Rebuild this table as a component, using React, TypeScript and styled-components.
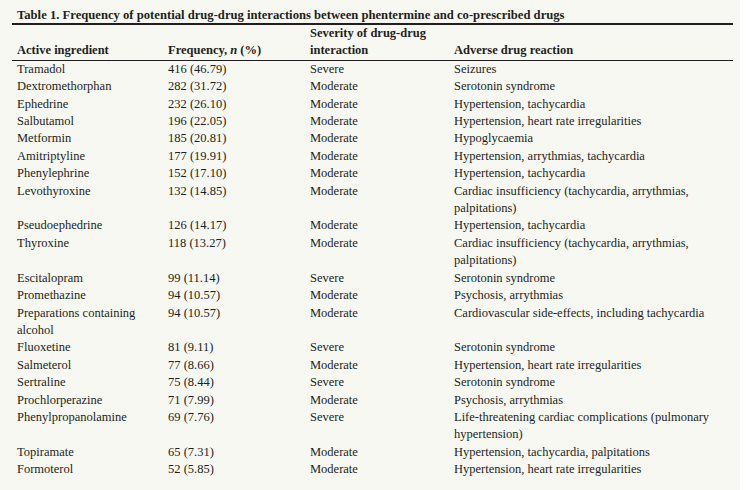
import React from 'react';
import styled, { createGlobalStyle } from 'styled-components';

const GlobalStyle = createGlobalStyle`
  html, body {
    margin: 0;
    padding: 0;
    background: #ffffff;
  }
`;

const Page = styled.div`
  width: 740px;
  height: 490px;
  background: #f7f8f2;
  box-sizing: border-box;
  padding: 7px 0 0 12px;
  font-family: "Liberation Serif", "Times New Roman", serif;
  color: #231f20;
`;

const Caption = styled.div`
  width: 721px;
  box-sizing: border-box;
  padding: 0 0 0 5px;
  font-size: 12.65px;
  font-weight: bold;
  line-height: 16px;
  border-bottom: 2px solid #231f20;
`;

const Table = styled.table`
  width: 721px;
  border-collapse: collapse;
  table-layout: fixed;
  font-size: 12.5px;
  line-height: 17.4px;
`;

const HeadCell = styled.th<{ $w?: number }>`
  width: ${p => (p.$w ? `${p.$w}px` : 'auto')};
  text-align: left;
  vertical-align: bottom;
  font-weight: bold;
  padding: 0 0 0 5px;
  border-bottom: 1px solid #231f20;
  white-space: nowrap;
`;

const Cell = styled.td`
  vertical-align: top;
  padding: 0 0 0 5px;
  white-space: nowrap;
`;

type Row = [string, string, string, string];

const rows: Row[] = [
  ['Tramadol', '416 (46.79)', 'Severe', 'Seizures'],
  ['Dextromethorphan', '282 (31.72)', 'Moderate', 'Serotonin syndrome'],
  ['Ephedrine', '232 (26.10)', 'Moderate', 'Hypertension, tachycardia'],
  ['Salbutamol', '196 (22.05)', 'Moderate', 'Hypertension, heart rate irregularities'],
  ['Metformin', '185 (20.81)', 'Moderate', 'Hypoglycaemia'],
  ['Amitriptyline', '177 (19.91)', 'Moderate', 'Hypertension, arrythmias, tachycardia'],
  ['Phenylephrine', '152 (17.10)', 'Moderate', 'Hypertension, tachycardia'],
  ['Levothyroxine', '132 (14.85)', 'Moderate', 'Cardiac insufficiency (tachycardia, arrythmias,\npalpitations)'],
  ['Pseudoephedrine', '126 (14.17)', 'Moderate', 'Hypertension, tachycardia'],
  ['Thyroxine', '118 (13.27)', 'Moderate', 'Cardiac insufficiency (tachycardia, arrythmias,\npalpitations)'],
  ['Escitalopram', '99 (11.14)', 'Severe', 'Serotonin syndrome'],
  ['Promethazine', '94 (10.57)', 'Moderate', 'Psychosis, arrythmias'],
  ['Preparations containing\nalcohol', '94 (10.57)', 'Moderate', 'Cardiovascular side-effects, including tachycardia'],
  ['Fluoxetine', '81 (9.11)', 'Severe', 'Serotonin syndrome'],
  ['Salmeterol', '77 (8.66)', 'Moderate', 'Hypertension, heart rate irregularities'],
  ['Sertraline', '75 (8.44)', 'Severe', 'Serotonin syndrome'],
  ['Prochlorperazine', '71 (7.99)', 'Moderate', 'Psychosis, arrythmias'],
  ['Phenylpropanolamine', '69 (7.76)', 'Severe', 'Life-threatening cardiac complications (pulmonary\nhypertension)'],
  ['Topiramate', '65 (7.31)', 'Moderate', 'Hypertension, tachycardia, palpitations'],
  ['Formoterol', '52 (5.85)', 'Moderate', 'Hypertension, heart rate irregularities'],
];

const lines = (text: string) =>
  text.split('\n').map((part, i) => (
    <React.Fragment key={i}>
      {i > 0 && <br />}
      {part}
    </React.Fragment>
  ));

export default function App() {
  return (
    <>
      <GlobalStyle />
      <Page>
        <Caption>
          Table 1. Frequency of potential drug-drug interactions between phentermine and co-prescribed drugs
        </Caption>
        <Table>
          <thead>
            <tr>
              <HeadCell $w={146}>Active ingredient</HeadCell>
              <HeadCell $w={137}>
                Frequency, <i>n</i> (%)
              </HeadCell>
              <HeadCell $w={139}>
                Severity of drug-drug
                <br />
                interaction
              </HeadCell>
              <HeadCell>Adverse drug reaction</HeadCell>
            </tr>
          </thead>
          <tbody>
            {rows.map(r => (
              <tr key={r[0]}>
                {r.map((c, i) => (
                  <Cell key={i}>{lines(c)}</Cell>
                ))}
              </tr>
            ))}
          </tbody>
        </Table>
      </Page>
    </>
  );
}
